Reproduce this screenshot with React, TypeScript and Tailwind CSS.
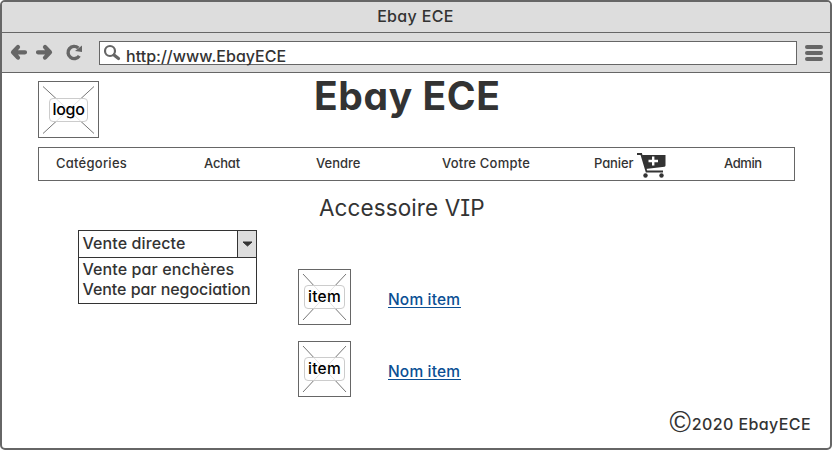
import React from "react";

const nav = [
  { label: "Catégories", cls: "w-[148px]", text: "tracking-[0.25px]" },
  { label: "Achat", cls: "w-[112px]", text: "tracking-[-0.2px]" },
  { label: "Vendre", cls: "w-[126px]", text: "tracking-[0px]" },
  { label: "Votre Compte", cls: "w-[152px]", text: "tracking-[0.2px]" },
];

function Placeholder({ label, box, tag, w }: { label: string; box: string; tag: string; w: number }) {
  return (
    <div className={`relative flex shrink-0 items-center justify-center border border-[#666] ${box}`}>
      <svg className="absolute inset-0" width={w} height={w === 59 ? 55 : 54} stroke="#777" strokeWidth="1">
        <path d={w === 59 ? "M4 4.5 55 51.5M55 4.5 4 51.5" : "M4 4 47 50M47 4 4 50"} />
      </svg>
      <div className={`relative flex items-center justify-center rounded-[4px] border border-[#ccc] bg-white/80 font-medium text-black ${tag}`}>
        {label}
      </div>
    </div>
  );
}

function ItemRow() {
  return (
    <div className="flex">
      <Placeholder label="item" w={51} box="h-[56px] w-[53px]" tag="h-[24px] w-[41px] text-[15.5px] pb-[1px] tracking-[0.3px]" />
      <a className="ml-[37px] mt-[22px] h-[17px] w-[73px] whitespace-nowrap border-b border-[#0b4f94] text-[15.5px] font-medium leading-[17px] tracking-[0.15px] text-[#0b4f94]">
        Nom item
      </a>
    </div>
  );
}

export default function App() {
  return (
    <div className="flex h-[450px] w-[832px] flex-col overflow-hidden rounded-[5px] border-2 border-[#666] bg-white font-['Inter',sans-serif] font-medium text-[#333] [font-feature-settings:'cv11','cv08']">
      <div className="flex h-[31px] shrink-0 justify-center border-b border-[#666] bg-[#ddd] pt-[4px] text-[16px] leading-[20px]">
        <span className="mr-[1px] tracking-[0.35px]">Ebay ECE</span>
      </div>
      <div className="flex h-[40px] shrink-0 items-start border-b border-[#666] bg-[#ddd]">
        <svg width="97" height="38" fill="none" stroke="#666" strokeLinecap="round" strokeLinejoin="round">
          <path d="M16 14 11 19.300l5 5.300M12 19.300H23" strokeWidth="4.200" />
          <path d="M43 14l5 5.300-5 5.300M47 19.300H36" strokeWidth="4.200" />
          <path d="M77.300 22.800A6.100 6.100 0 1 1 76.300 15" strokeWidth="3.400" strokeLinecap="butt" />
          <path d="M80 12.500v6.500l-7-1z" fill="#666" stroke="none" />
        </svg>
        <div className="mt-[8px] flex h-[24px] w-[698px] items-start border border-[#666] bg-white">
          <svg width="26" height="22" fill="none" stroke="#666">
            <circle cx="10" cy="9" r="5" strokeWidth="2.200" />
            <path d="m14 13 4.500 3.500" strokeWidth="3.200" strokeLinecap="round" />
          </svg>
          <span className="mt-[4px] text-[16px] leading-[20px] tracking-[0.020px]">http://www.EbayECE</span>
        </div>
        <div className="ml-[8px] mt-[12px] flex flex-col gap-[2px]">
          <i className="h-[4px] w-[18px] rounded-full bg-[#666]" />
          <i className="h-[4px] w-[18px] rounded-full bg-[#666]" />
          <i className="h-[4px] w-[18px] rounded-full bg-[#666]" />
        </div>
      </div>
      <div className="flex h-[74px] shrink-0 pl-[36px] pt-[8px]">
        <Placeholder label="logo" w={59} box="h-[57px] w-[61px]" tag="h-[24px] w-[39px] text-[16px] pb-[2px] tracking-[-0.3px]" />
        <h1 className="ml-[215px] mt-[-8px] whitespace-nowrap text-[39px] font-bold leading-[46px] tracking-[0.6px]">Ebay ECE</h1>
      </div>
      <nav className="ml-[36px] flex h-[34px] w-[757px] shrink-0 items-center whitespace-nowrap border border-[#666] pl-[17px] text-[13px] leading-[16px]">
        {nav.map((n) => (
          <span key={n.label} className={`mb-[2px] shrink-0 ${n.cls} ${n.text}`}>{n.label}</span>
        ))}
        <span className="mb-[2px] w-[42px] shrink-0 tracking-[-0.1px]">Panier</span>
        <svg width="31" height="28" className="mt-[4px] shrink-0" fill="#333">
          <path d="M1 2h4.200l5.300 17.500H27" fill="none" stroke="#333" strokeWidth="1.800" />
          <path d="M6 3h23.500v10.500q0 1-1 1.200L9.500 17z" />
          <path d="M12.500 9h9.500M17.200 4.500v9" stroke="#fff" strokeWidth="2.400" />
          <circle cx="9.500" cy="23.500" r="2.200" />
          <circle cx="25.500" cy="23.500" r="2.200" />
        </svg>
        <span className="mb-[2px] ml-[57px] tracking-[-0.4px]">Admin</span>
      </nav>
      <h2 className="ml-[317px] mt-[13px] h-[28px] shrink-0 whitespace-nowrap text-[22.500px] font-normal leading-[28px] tracking-[0.1px]">Accessoire VIP</h2>
      <div className="flex flex-1 pl-[76px] text-[16px]">
        <div className="mt-[8px] h-[74px] w-[179px] whitespace-nowrap border border-[#333]">
          <div className="flex h-[27px] border-b border-[#333]">
            <span className="w-[158px] pl-[3.5px] leading-[25px] tracking-[0.1px]">Vente directe</span>
            <div className="flex flex-1 items-center justify-center border-l border-[#333] bg-[#ddd]">
              <svg width="11" height="6"><path d="M1 1h9L5.500 5z" fill="#333" stroke="#333" strokeLinejoin="round" /></svg>
            </div>
          </div>
          <div className="pl-[3.5px] pt-[1px] leading-[20px]">
            <div className="tracking-[0.1px]">Vente par enchères</div>
            <div className="tracking-[-0.050px]">Vente par negociation</div>
          </div>
        </div>
        <div className="ml-[41px] mt-[47px] flex flex-col gap-[16px]">
          <ItemRow />
          <ItemRow />
        </div>
      </div>
      <footer className="flex h-[40px] shrink-0 items-start justify-end pr-[19px] text-[16px] leading-[20px]">
        <span className="mr-[1px] mt-[-1px] font-['Liberation_Sans',sans-serif] text-[29px] font-normal leading-[30px]">©</span>
        <span className="mt-[6px] tracking-[0.400px]">2020 EbayECE</span>
      </footer>
    </div>
  );
}
